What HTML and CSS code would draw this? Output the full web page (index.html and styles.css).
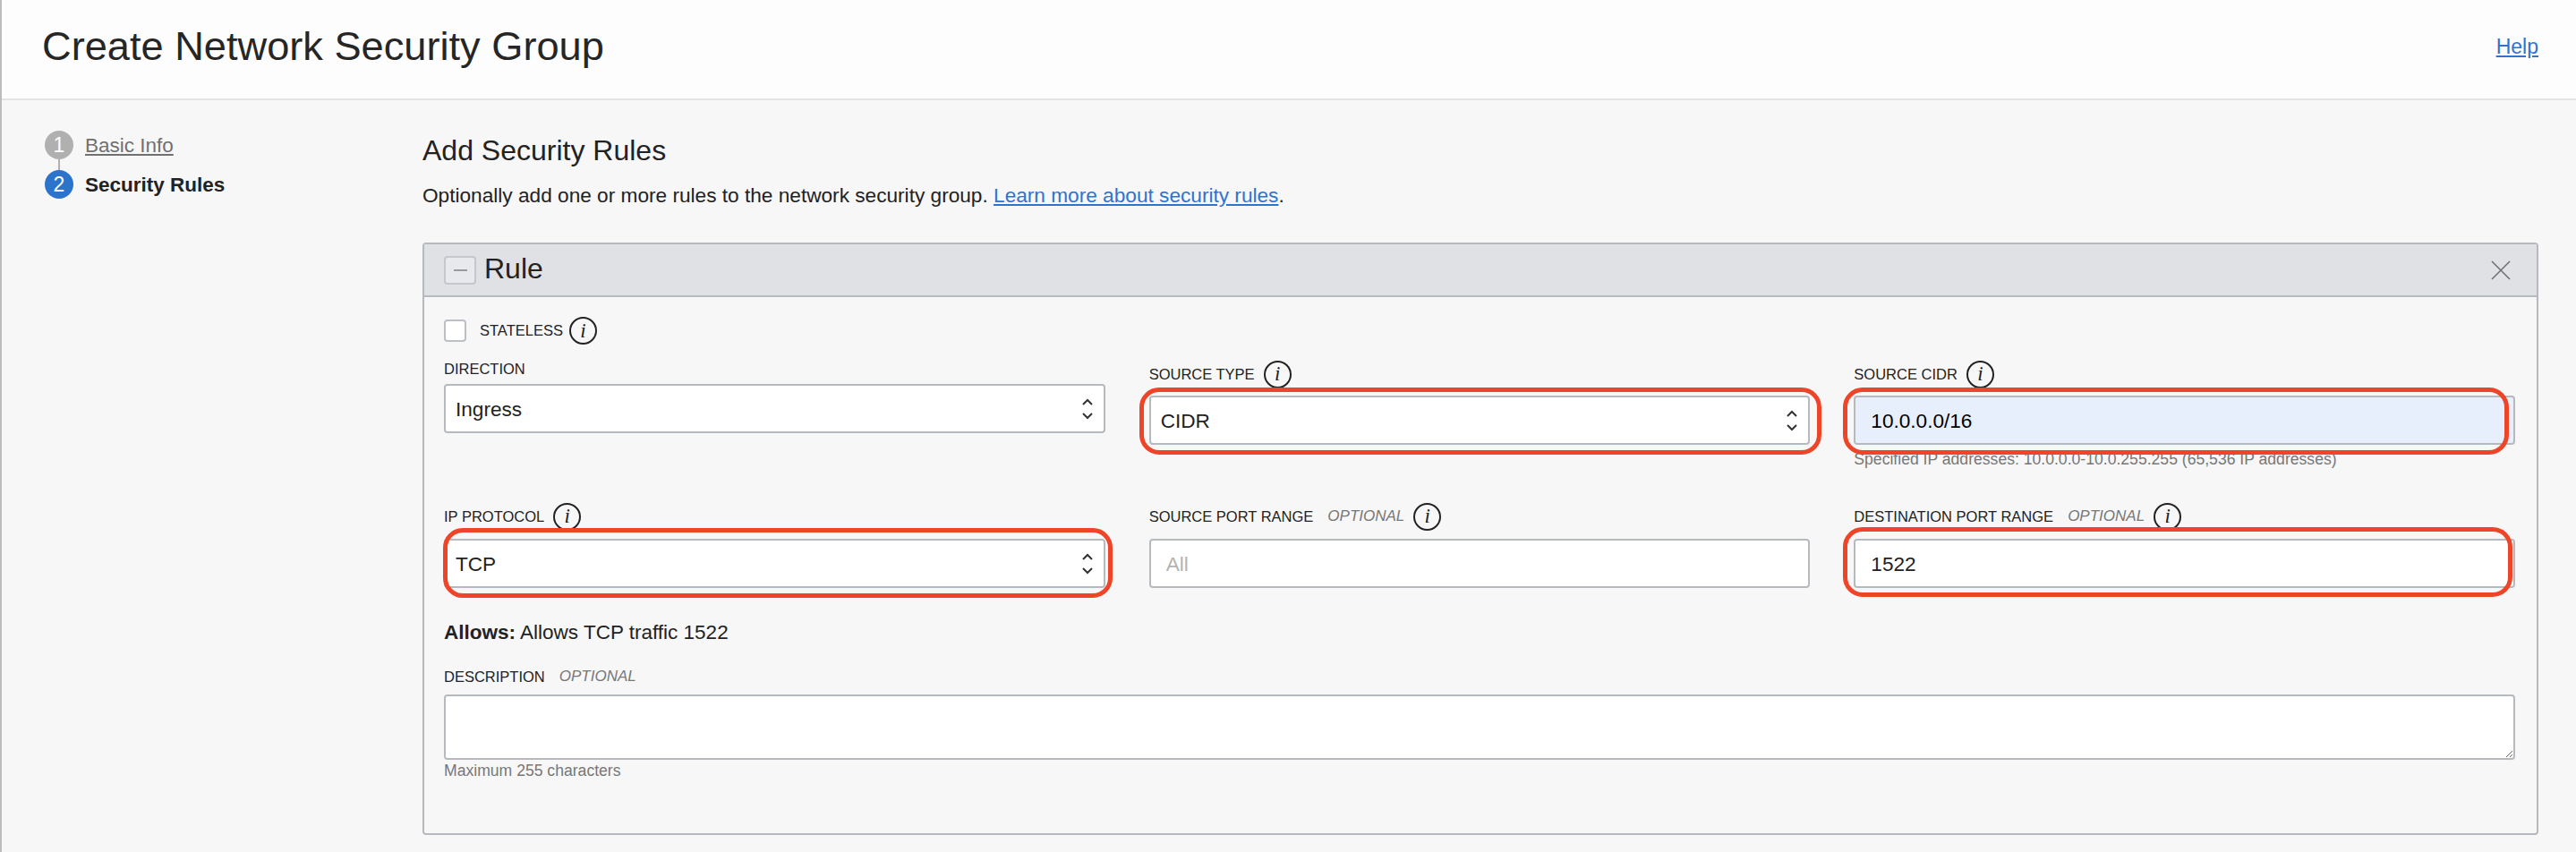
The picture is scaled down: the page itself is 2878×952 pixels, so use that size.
FILE: index.html
```html
<!DOCTYPE html>
<html lang="en">
<head>
    <meta charset="UTF-8">
    <title>Create Network Security Group</title>
    <link rel="stylesheet" href="styles.css">
</head>
<body>
    <div class="page">
        <header class="page-head">
            <h1>Create Network Security Group</h1>
            <a class="help-link" href="#">Help</a>
        </header>
        <div class="page-body">
            <nav class="steps">
                <div class="step">
                    <span class="step-num">1</span>
                    <a class="step-link" href="#">Basic Info</a>
                </div>
                <div class="step-line"></div>
                <div class="step step-current">
                    <span class="step-num">2</span>
                    <span class="step-name">Security Rules</span>
                </div>
            </nav>
            <main class="content">
                <h2>Add Security Rules</h2>
                <p class="intro">Optionally add one or more rules to the network security group. <a href="#">Learn more about security rules</a>.</p>
                <section class="rule">
                    <div class="rule-head">
                        <button class="toggle" type="button"><span class="toggle-bar"></span></button>
                        <h3>Rule</h3>
                        <svg class="close" width="22" height="22" viewBox="0 0 22 22">
                            <path d="M1 1 L21 21 M21 1 L1 21" fill="none" stroke="#6e6e6e" stroke-width="1.5"/>
                        </svg>
                    </div>
                    <form class="rule-body">
                        <div class="row row-first">
                            <div class="field field-direction">
                                <div class="check-row">
                                    <input class="check" type="checkbox" id="stateless">
                                    <label class="label" for="stateless">STATELESS</label>
                                    <span class="info">i</span>
                                </div>
                                <div class="label-row label-row-plain">
                                    <label class="label">DIRECTION</label>
                                </div>
                                <div class="control">
                                    <select class="select"><option>Ingress</option></select>
                                    <svg class="updown" width="14" height="24" viewBox="0 0 14 24"><path d="M2 7 L7 2 L12 7 M2 17 L7 22 L12 17" fill="none" stroke="#333" stroke-width="2"/></svg>
                                </div>
                            </div>
                            <div class="field">
                                <div class="label-row">
                                    <label class="label">SOURCE TYPE</label>
                                    <span class="info">i</span>
                                </div>
                                <div class="control">
                                    <select class="select"><option>CIDR</option></select>
                                    <svg class="updown" width="14" height="24" viewBox="0 0 14 24"><path d="M2 7 L7 2 L12 7 M2 17 L7 22 L12 17" fill="none" stroke="#333" stroke-width="2"/></svg>
                                    <div class="mark mark-type"></div>
                                </div>
                            </div>
                            <div class="field">
                                <div class="label-row">
                                    <label class="label">SOURCE CIDR</label>
                                    <span class="info">i</span>
                                </div>
                                <div class="control">
                                    <input class="text-input filled" type="text" value="10.0.0.0/16">
                                    <div class="mark mark-cidr"></div>
                                </div>
                                <div class="hint">Specified IP addresses: 10.0.0.0-10.0.255.255 (65,536 IP addresses)</div>
                            </div>
                        </div>
                        <div class="row row-second">
                            <div class="field">
                                <div class="label-row">
                                    <label class="label">IP PROTOCOL</label>
                                    <span class="info">i</span>
                                </div>
                                <div class="control">
                                    <select class="select"><option>TCP</option></select>
                                    <svg class="updown" width="14" height="24" viewBox="0 0 14 24"><path d="M2 7 L7 2 L12 7 M2 17 L7 22 L12 17" fill="none" stroke="#333" stroke-width="2"/></svg>
                                    <div class="mark mark-proto"></div>
                                </div>
                            </div>
                            <div class="field">
                                <div class="label-row">
                                    <label class="label">SOURCE PORT RANGE</label>
                                    <em class="optional">OPTIONAL</em>
                                    <span class="info">i</span>
                                </div>
                                <div class="control">
                                    <input class="text-input" type="text" placeholder="All">
                                </div>
                            </div>
                            <div class="field">
                                <div class="label-row">
                                    <label class="label">DESTINATION PORT RANGE</label>
                                    <em class="optional">OPTIONAL</em>
                                    <span class="info">i</span>
                                </div>
                                <div class="control">
                                    <input class="text-input" type="text" value="1522">
                                    <div class="mark mark-dest"></div>
                                </div>
                            </div>
                        </div>
                        <p class="allows"><strong>Allows:</strong> Allows TCP traffic 1522</p>
                        <div class="label-row label-row-desc">
                            <label class="label">DESCRIPTION</label>
                            <em class="optional">OPTIONAL</em>
                        </div>
                        <textarea class="desc"></textarea>
                        <div class="hint hint-desc">Maximum 255 characters</div>
                    </form>
                </section>
            </main>
        </div>
    </div>
</body>
</html>
```

FILE: styles.css
```css
html, body {
    height: 100%;
    margin: 0;
    overflow: hidden;
}

body {
    font-family: "Liberation Sans", Arial, sans-serif;
    color: #222;
    background-color: #f7f7f7;
}

a {
    color: #2e74cf;
}

.page {
    height: 100%;
    border-left: 2px solid #bcbcbc;
    box-sizing: border-box;
}

/* top bar */
.page-head {
    height: 110px;
    display: flex;
    align-items: center;
    justify-content: space-between;
    padding: 0 42px 0 45px;
    background-color: #fdfdfd;
    border-bottom: 2px solid #e3e3e3;
}

h1 {
    margin: 0 0 6px;
    font-size: 45.2px;
    font-weight: 400;
    color: #262626;
}

.help-link {
    font-size: 23px;
    margin-bottom: 6px;
}

.page-body {
    display: flex;
}

/* left steps */
.steps {
    width: 470px;
    flex: none;
    box-sizing: border-box;
    padding: 34px 0 0 48px;
}

.step {
    display: flex;
    align-items: center;
    gap: 13px;
    font-size: 22.5px;
}

.step-num {
    width: 32px;
    height: 32px;
    border-radius: 50%;
    background-color: #b0b0b0;
    color: #fff;
    display: flex;
    align-items: center;
    justify-content: center;
    font-size: 23px;
}

.step-current .step-num {
    background-color: #2c73cb;
}

.step-line {
    width: 2px;
    height: 12px;
    margin-left: 15px;
    background-color: #b0b0b0;
}

.step-link {
    color: #707070;
    margin-top: 2px;
}

.step-name {
    font-weight: 700;
    margin-top: 2px;
}

/* main part */
.content {
    flex: 1;
    padding: 36px 42px 0 0;
    min-width: 0;
}

h2 {
    margin: 0;
    font-size: 32px;
    font-weight: 400;
    line-height: 40px;
}

.intro {
    margin: 16px 0 0;
    font-size: 22.65px;
    line-height: 28px;
}

.rule {
    margin-top: 39px;
    height: 662px;
    box-sizing: border-box;
    border: 2px solid #b6babf;
    border-radius: 4px;
}

.rule-head {
    height: 57px;
    display: flex;
    align-items: center;
    padding: 0 29px 0 22px;
    background-color: #e0e1e5;
    border-bottom: 2px solid #b6babf;
}

.toggle {
    width: 36px;
    height: 32px;
    padding: 0;
    display: flex;
    align-items: center;
    justify-content: center;
    background-color: #e8e9ec;
    border: 2px solid #c4c7cc;
    border-radius: 4px;
}

.toggle-bar {
    width: 15px;
    height: 2px;
    background-color: #9b9b9b;
}

h3 {
    margin: 0 0 2px 9px;
    font-size: 32px;
    font-weight: 400;
    flex: 1;
}

.rule-body {
    padding: 22px 24px 0 22px;
}

.row {
    display: grid;
    grid-template-columns: repeat(3, 1fr);
    column-gap: 49px;
}

.row-first {
    height: 208px;
}

.row-first .field:not(.field-direction) {
    padding-top: 49px;
}

.check-row {
    display: flex;
    align-items: center;
    height: 31px;
}

.check {
    appearance: none;
    width: 25px;
    height: 25px;
    margin: 0 15px 0 0;
    background-color: #fff;
    border: 2px solid #bcc0c5;
    border-radius: 4px;
    box-sizing: border-box;
}

.label {
    font-size: 16.5px;
    font-weight: 400;
    color: #222;
}

.check-row .label {
    margin-right: 7px;
}

.label-row {
    display: flex;
    align-items: center;
    height: 30px;
    gap: 10px;
    margin-bottom: 9px;
}

.label-row-plain {
    height: 20px;
    margin: 17px 0 7px;
}

.row-second .label-row {
    margin-bottom: 10px;
}

.optional {
    font-size: 17px;
    color: #777;
    margin-left: 6px;
}

.info {
    width: 31px;
    height: 31px;
    box-sizing: border-box;
    flex: none;
    border: 2px solid #222;
    border-radius: 50%;
    display: flex;
    align-items: center;
    justify-content: center;
    font-family: "Liberation Serif", serif;
    font-style: italic;
    font-size: 23px;
    color: #222;
}

.control {
    position: relative;
    height: 55px;
}

.select,
.text-input {
    width: 100%;
    height: 55px;
    box-sizing: border-box;
    margin: 0;
    font-family: inherit;
    font-size: 22.6px;
    color: #222;
    background-color: #fff;
    border: 2px solid #b6babf;
    border-radius: 4px;
    outline: none;
}

.select {
    appearance: none;
    padding: 2px 36px 0 11px;
}

.text-input {
    padding: 2px 17px 0;
}

.text-input::placeholder {
    color: #b3b3b3;
    opacity: 1;
}

.filled {
    background-color: #e8effc;
    color: #000;
}

.updown {
    position: absolute;
    top: 16px;
    right: 13px;
}

/* red rings drawn over the screenshot */
.mark {
    position: absolute;
    border: 5px solid #ee4428;
    border-radius: 22px;
    pointer-events: none;
}

.mark-type {
    top: -9px;
    bottom: -11px;
    left: -11px;
    right: -13px;
}

.mark-cidr {
    top: -9px;
    bottom: -11px;
    left: -12px;
    right: 7px;
}

.mark-proto {
    top: -12px;
    bottom: -11px;
    left: -1px;
    right: -8px;
}

.mark-dest {
    top: -13px;
    bottom: -10px;
    left: -12px;
    right: 3px;
}

.hint {
    margin-top: 7px;
    font-size: 17.6px;
    line-height: 18px;
    color: #777;
}

.allows {
    margin: 36px 0 0;
    font-size: 22.5px;
    line-height: 28px;
}

.label-row-desc {
    height: 20px;
    margin: 25px 0 10px;
}

.desc {
    display: block;
    width: 100%;
    height: 73px;
    box-sizing: border-box;
    margin: 0;
    background-color: #fff;
    border: 2px solid #b6babf;
    border-radius: 4px;
    outline: none;
}

.hint-desc {
    margin-top: 3px;
}
```
